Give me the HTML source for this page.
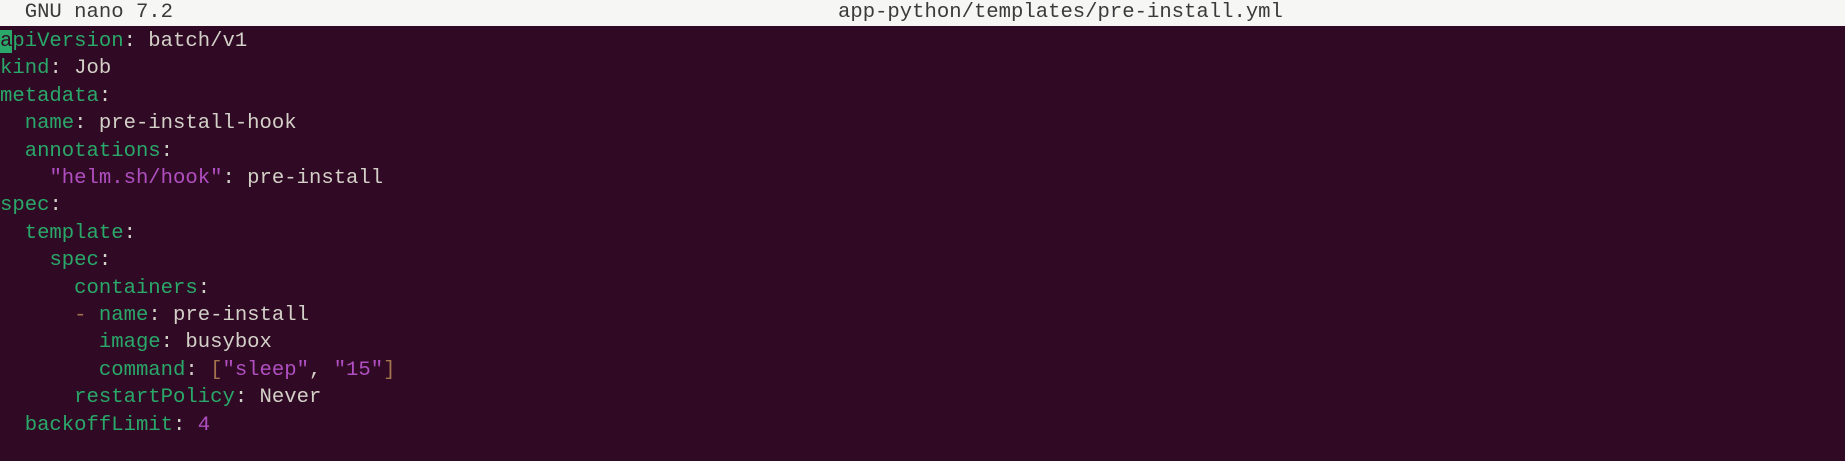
<!DOCTYPE html>
<html><head><style>
html,body{margin:0;padding:0;width:1845px;height:461px;overflow:hidden;background:#300a24;}
.t{position:absolute;left:0;top:0;width:1845px;height:26px;background:#f6f6f5;color:#3a3a3a;font:20.6px/26px "Liberation Mono","DejaVu Sans Mono",monospace;white-space:pre;}
pre{position:absolute;left:0;top:28px;margin:0;font:20.6px/27.4px "Liberation Mono","DejaVu Sans Mono",monospace;color:#d3d0c8;}
.k{color:#2aa86a}.s{color:#b04fc1}.d{color:#a2734c}
.c{background:#2aa86a;color:#300a24}
</style></head><body>
<div class="t">  GNU nano 7.2<span style="position:absolute;left:838px;top:0">app-python/templates/pre-install.yml</span></div>
<pre><span class="c">a</span><span class="k">piVersion</span>: batch/v1
<span class="k">kind</span>: Job
<span class="k">metadata</span>:
  <span class="k">name</span>: pre-install-hook
  <span class="k">annotations</span>:
    <span class="s">"helm.sh/hook"</span>: pre-install
<span class="k">spec</span>:
  <span class="k">template</span>:
    <span class="k">spec</span>:
      <span class="k">containers</span>:
      <span class="d">-</span> <span class="k">name</span>: pre-install
        <span class="k">image</span>: busybox
        <span class="k">command</span>: <span class="d">[</span><span class="s">"sleep"</span>, <span class="s">"15"</span><span class="d">]</span>
      <span class="k">restartPolicy</span>: Never
  <span class="k">backoffLimit</span>: <span class="s">4</span></pre>
</body></html>
